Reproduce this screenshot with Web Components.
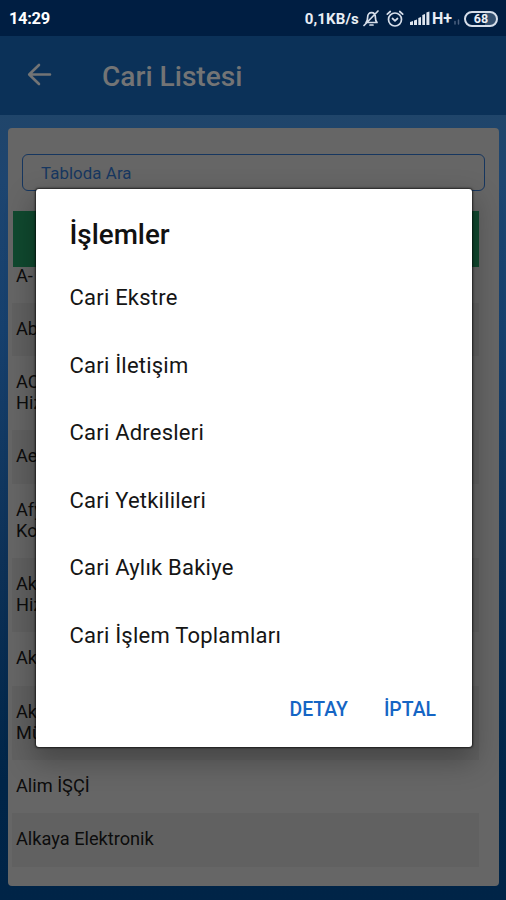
<!DOCTYPE html>
<html lang="tr">
<head>
<meta charset="utf-8">
<title>Cari Listesi</title>
<style>
html, body { margin: 0; height: 100%; overflow: hidden; }
body { font-family: Roboto, "Noto Sans", sans-serif; }
</style>
</head>
<body>
<cari-app></cari-app>
<script>
const define = (name, html) => {
  const t = document.createElement('template');
  t.innerHTML = html;
  customElements.define(name, class extends HTMLElement {
    constructor() {
      super();
      this.attachShadow({ mode: 'open' }).append(t.content.cloneNode(true));
    }
  });
};

define('status-bar', `
<style>
:host { display: flex; align-items: center; height: 36px; box-sizing: border-box; padding: 1px 8px 0 9px; background: #001e42; color: #e9eef5; font-weight: 700; }
.time { font-size: 16.5px; letter-spacing: -.35px; flex: 1; color: #fff; }
.rate { font-size: 15px; letter-spacing: .15px; }
.net { font-size: 16px; }
svg { display: block; flex: none; fill: none; stroke: #d6deea; stroke-width: 1.7; stroke-linecap: round; stroke-linejoin: round; }
.bell { margin-left: 4px; }
.alarm { margin-left: 7px; }
.sig { margin: 0 2px 0 6px; }
.tiny { margin: 6px 4px 0 2px; }
.bat { display: flex; align-items: center; justify-content: center; box-sizing: border-box; width: 34px; height: 16px; border: 2px solid #d6deea; border-radius: 8px; font-size: 12.5px; line-height: 12px; background: linear-gradient(90deg, transparent 65%, #34506f 65%); }
</style>
<span class="time">14:29</span><span class="rate">0,1KB/s</span>
<svg class="bell" width="16" height="17" viewBox="0 0 16 17"><path d="M3 12.5h11c-1.4-1.2-1.6-2.500-1.600-5C12.400 4 10.500 2.700 8.500 2.700S4.600 4 4.600 7.500c0 2.500-.3 3.800-1.600 5zM7 15h3M15 1 1 15.500"/></svg>
<svg class="alarm" width="18" height="18" viewBox="0 0 18 18"><circle cx="9" cy="9.500" r="6.500"/><path d="M6.500 8.500 9 10.800l2.500-2.300M1.300 4.200 4.300 1.500M16.700 4.200 13.700 1.500"/></svg>
<svg class="sig" width="20" height="15" viewBox="0 0 20 15" style="stroke:none;fill:#dfe6ef"><path d="M0 14v-3l3-1v4zM4 14V9.500l3-1V14zM8.300 14V7l2.700-1v8zM12.300 14V4L15 3v11zM16.400 14V1.500L19.400.5V14z"/></svg>
<span class="net">H+</span>
<svg class="tiny" width="6" height="6" viewBox="0 0 6 6" style="stroke:#4b6180;stroke-width:1.500"><path d="M1 5V2.500M4.500 5V1"/></svg>
<span class="bat">68</span>`);

define('app-bar', `
<style>
:host { display: flex; align-items: center; gap: 50px; height: 79px; box-sizing: border-box; padding: 0 0 2px 27px; background: #0b3158; color: #737475; }
svg { display: block; fill: none; stroke: #737475; stroke-width: 2.600; stroke-linecap: round; stroke-linejoin: round; }
h1 { margin: 4px 0 0; font-size: 28.100px; font-weight: 500; line-height: 32px; white-space: nowrap; }
</style>
<svg width="25" height="24" viewBox="0 0 25 24"><path d="M12 2 2.200 11.500 12 21M2.500 11.500H23"/></svg>
<h1><slot></slot></h1>`);

define('search-box', `
<style>
:host { display: flex; align-items: center; box-sizing: border-box; height: 37px; margin: 0 14px; padding: 0 18px; border: 1.500px solid #16365f; border-radius: 6px; color: #173760; font-size: 16.800px; letter-spacing: .1px; }
</style><slot></slot>`);

define('table-row', `
<style>
:host { display: block; flex: none; box-sizing: border-box; padding: 15px 4px 17px; font-size: 18.200px; line-height: 21.200px; color: #0c0c0c; white-space: nowrap; }
:host([striped]) { background: #616161; }
</style><slot></slot>`);

define('data-card', `
<style>
:host { display: flex; flex-direction: column; box-sizing: border-box; margin: 13px 7px 14px 8px; padding: 26px 0 19.500px; flex: 1; min-height: 0; background: #666; border-radius: 4px; }
.head { height: 56px; flex: none; margin: 20px 20px 0 5px; background: #10492f; }
.rows { flex: 1; min-height: 0; display: flex; flex-direction: column; justify-content: flex-end; overflow: hidden; margin: 0 20px 0 4px; }
</style>
<search-box>Tabloda Ara</search-box>
<div class="head"></div>
<div class="rows"><slot></slot></div>`);

define('dialog-item', `
<style>
:host { display: flex; align-items: center; height: 67.500px; font-size: 22px; letter-spacing: .22px; color: #151515; white-space: nowrap; }
</style><span><slot></slot></span>`);

define('action-dialog', `
<style>
:host { position: absolute; left: 36px; top: 188.500px; width: 435.500px; height: 558.500px; box-sizing: border-box; display: flex; flex-direction: column; padding: 30px 35.500px 20px 33.500px; background: #fff; border-radius: 3px; box-shadow: 0 0 2px 1px rgba(0,0,0,.65), 0 12px 28px 3px rgba(0,0,0,.28); }
h2 { margin: 0 0 13.500px; font-size: 27.800px; font-weight: 500; line-height: 32px; color: #111; }
.actions { display: flex; justify-content: flex-end; gap: 36px; margin-top: 28.500px; color: #1565c4; font-size: 19.400px; font-weight: 500; line-height: 24px; }
</style>
<h2><slot name="title"></slot></h2>
<slot></slot>
<div class="actions"><span>DETAY</span><span>İPTAL</span></div>`);

define('cari-app', `
<style>
:host { display: flex; flex-direction: column; position: relative; width: 506px; height: 900px; overflow: hidden; background: linear-gradient(180deg, #20456a 115px, #1d4570 180px, #16406d 330px, #0d3157 560px, #002548 780px, #002447 900px); }
</style>
<status-bar></status-bar>
<app-bar>Cari Listesi</app-bar>
<data-card>
<table-row>A-</table-row>
<table-row striped>Ab</table-row>
<table-row>AC<br>Hiz</table-row>
<table-row striped>Ae</table-row>
<table-row>Afy<br>Ko</table-row>
<table-row striped>Ak<br>Hiz</table-row>
<table-row>Ak</table-row>
<table-row striped>Ak<br>Mü</table-row>
<table-row>Alim İŞÇİ</table-row>
<table-row striped>Alkaya Elektronik</table-row>
</data-card>
<action-dialog>
<span slot="title">İşlemler</span>
<dialog-item>Cari Ekstre</dialog-item>
<dialog-item>Cari İletişim</dialog-item>
<dialog-item>Cari Adresleri</dialog-item>
<dialog-item>Cari Yetkilileri</dialog-item>
<dialog-item>Cari Aylık Bakiye</dialog-item>
<dialog-item>Cari İşlem Toplamları</dialog-item>
</action-dialog>`);
</script>
</body>
</html>
